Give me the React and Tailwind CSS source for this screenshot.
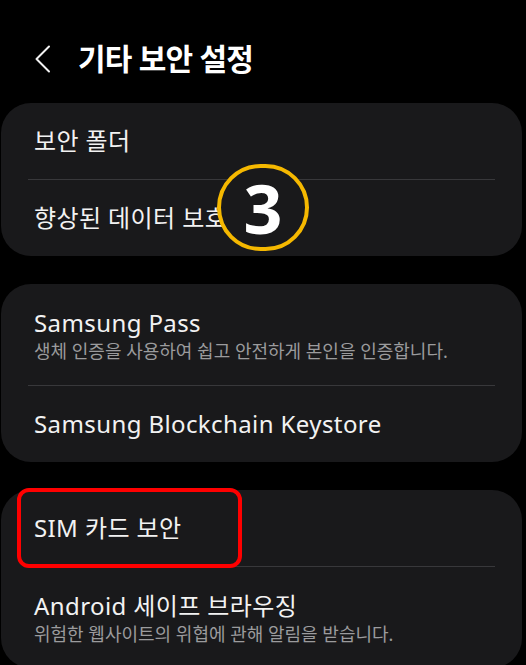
import React from "react";

const font = { fontFamily: '"Noto Sans", "Noto Sans CJK KR", sans-serif' };

function Row({ title, sub, divider }) {
  return (
    <div className="relative">
      <div className={`flex flex-col justify-center px-[33px] ${sub ? "h-[101px]" : "h-[76px]"}`}>
        <div className="text-[24px] leading-[30px] tracking-[0.4px] text-[#f2f2f2]">{title}</div>
        {sub && <div className="text-[18px] leading-[22px] text-[#9b9b9d] mt-[2px]">{sub}</div>}
      </div>
      {divider && <div className="mx-[27px] h-px bg-[#38383b]" />}
    </div>
  );
}

export default function App() {
  return (
    <div className="relative w-[526px] h-[665px] bg-black overflow-hidden" style={font}>
      <div className="flex items-center h-[103px] pt-[14px] pl-[33px]">
        <svg width="20" height="28" viewBox="0 0 20 28" className="mr-[25px]">
          <path d="M16 1.5 L3.5 14 L16 26.5" fill="none" stroke="#f2f2f2" strokeWidth="2" strokeLinecap="round" strokeLinejoin="round" />
        </svg>
        <div className="text-[30px] font-bold text-white tracking-tight">기타 보안 설정</div>
      </div>

      <div className="flex flex-col gap-[28px] pl-[1px] w-[522px]">
        <div className="bg-[#19191b] rounded-[30px]">
          <Row title="보안 폴더" divider />
          <Row title="향상된 데이터 보호" />
        </div>
        <div className="bg-[#19191b] rounded-[30px]">
          <Row title="Samsung Pass" sub="생체 인증을 사용하여 쉽고 안전하게 본인을 인증합니다." divider />
          <Row title="Samsung Blockchain Keystore" />
        </div>
        <div className="bg-[#19191b] rounded-[30px]">
          <Row title="SIM 카드 보안" divider />
          <Row title="Android 세이프 브라우징" sub="위험한 웹사이트의 위협에 관해 알림을 받습니다." />
        </div>
      </div>

      <div className="absolute left-[217px] top-[164px] w-[92px] h-[87px] rounded-full border-[4px] border-[#f5b800] bg-[#19191b] flex items-center justify-center">
        <span className="text-[68px] font-bold text-white leading-none" style={{ fontFamily: '"Open Sans", sans-serif' }}>3</span>
      </div>

      <div className="absolute left-[17px] top-[488px] w-[225px] h-[80px] rounded-[12px] border-[4px] border-[#ff0000]" />
    </div>
  );
}
